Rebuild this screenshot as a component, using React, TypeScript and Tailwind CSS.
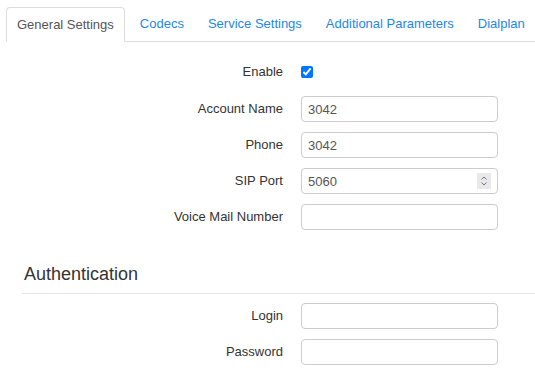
import React from 'react';

const tabs = ['General Settings', 'Codecs', 'Service Settings', 'Additional Parameters', 'Dialplan'];

const Row = ({ label, children }: { label: string; children: React.ReactNode }) => (
  <div className="flex items-center h-[26px]">
    <label className="w-[283px] text-right text-[13px] text-[#333]">{label}</label>
    <div className="ml-[18px]">{children}</div>
  </div>
);

const Input = ({ value = '' }: { value?: string }) => (
  <input
    type="text"
    defaultValue={value}
    className="w-[197px] h-[26px] border border-[#ccc] rounded-[4px] px-[6px] text-[13px] text-[#555] bg-white outline-none"
  />
);

const App = () => {
  return (
    <div className="w-[535px] h-[375px] bg-white overflow-hidden" style={{ fontFamily: '"Liberation Sans", Arial, sans-serif' }}>
      <div className="ml-[6px] pt-[7px] flex border-b border-[#ddd]">
        {tabs.map((t, i) => (
          <div
            key={t}
            className={
              i === 0
                ? 'shrink-0 whitespace-nowrap px-[10px] h-[35px] flex items-center text-[13px] text-[#555] bg-white border border-[#ddd] border-b-white rounded-t-[4px] -mb-px mr-[3px]'
                : 'shrink-0 whitespace-nowrap px-[12px] h-[34px] flex items-center text-[13px] text-[#1e88e5]'
            }
          >
            {t}
          </div>
        ))}
      </div>

      <div className="mt-[20px] flex flex-col">
        <div className="flex items-center h-[20px]">
          <label className="w-[283px] text-right text-[13px] text-[#333]">Enable</label>
          <input type="checkbox" defaultChecked className="ml-[18px] w-[12px] h-[12px] m-0" />
        </div>
        <div className="mt-[14px] flex flex-col gap-[10px]">
          <Row label="Account Name"><Input value="3042" /></Row>
          <Row label="Phone"><Input value="3042" /></Row>
          <Row label="SIP Port">
            <div className="relative">
              <Input value="5060" />
              <span className="absolute right-[7px] top-[5px] w-[14px] h-[16px] bg-[#e9e9ed] flex items-center justify-center">
                <svg width="8" height="12" viewBox="0 0 8 12" fill="none" stroke="#777" strokeWidth="1">
                  <path d="M1.5 4.5 L4 2 L6.5 4.5" />
                  <path d="M1.5 7.5 L4 10 L6.5 7.5" />
                </svg>
              </span>
            </div>
          </Row>
          <Row label="Voice Mail Number"><Input /></Row>
        </div>
      </div>

      <div className="ml-[22px] mt-[32px] pb-[7px] border-b border-[#e5e5e5]">
        <h2 className="ml-[2px] text-[18px] text-[#333] leading-[24px]">Authentication</h2>
      </div>

      <div className="mt-[9px] flex flex-col gap-[10px]">
        <Row label="Login"><Input /></Row>
        <Row label="Password"><Input /></Row>
      </div>
    </div>
  );
};

export default App;
